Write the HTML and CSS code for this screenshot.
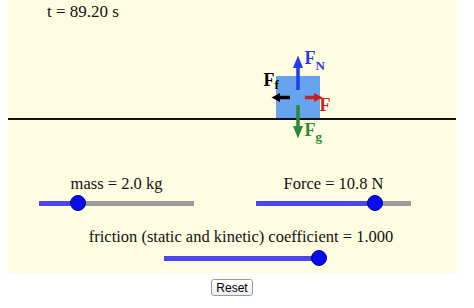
FILE: index.html
```html
<!DOCTYPE html>
<html>
<head>
<meta charset="utf-8">
<link rel="stylesheet" href="styles.css">
</head>
<body>
<div class="panel">
  <div class="time">t = 89.20 s</div>
  <svg class="scene" width="448" height="140" viewBox="0 0 448 140">
    <rect x="268" y="54" width="44" height="43" fill="#68a4ee"/>
    <line x1="0" y1="97" x2="448" y2="97" stroke="#111" stroke-width="2"/>
    <!-- normal force -->
    <line x1="290" y1="68" x2="290" y2="44" stroke="#1f3cf0" stroke-width="3.5"/>
    <polygon points="290,33.5 285,46 295,46" fill="#1f3cf0"/>
    <text class="flabel blue" x="296.5" y="41.5">F<tspan class="sub" dy="6.5">N</tspan></text>
    <!-- friction force -->
    <line x1="282" y1="75.5" x2="270" y2="75.5" stroke="#000" stroke-width="3.5"/>
    <polygon points="263.5,75.5 272,71 272,80" fill="#000"/>
    <text class="flabel black" x="255.5" y="64">F<tspan class="sub" dy="3">f</tspan></text>
    <!-- applied force -->
    <line x1="297" y1="75.5" x2="308" y2="75.5" stroke="#cc1f1f" stroke-width="3.5"/>
    <polygon points="314.5,75.5 306,71 306,80" fill="#cc1f1f"/>
    <text class="flabel red" x="311.5" y="88.5">F</text>
    <!-- gravity -->
    <line x1="290" y1="83" x2="290" y2="106" stroke="#2a8a36" stroke-width="3.5"/>
    <polygon points="290,116.5 285,104 295,104" fill="#2a8a36"/>
    <text class="flabel green" x="296.5" y="113.5">F<tspan class="sub" dy="5.5">g</tspan></text>
  </svg>
  <div class="pair">
    <div class="control">
      <div class="label">mass = 2.0 kg</div>
      <div class="slider">
        <div class="fill" style="width: 39px"></div>
        <div class="rest"></div>
        <div class="knob" style="left: 39px"></div>
      </div>
    </div>
    <div class="control">
      <div class="label">Force = 10.8 N</div>
      <div class="slider">
        <div class="fill" style="width: 119px"></div>
        <div class="rest"></div>
        <div class="knob" style="left: 119px"></div>
      </div>
    </div>
  </div>
  <div class="control single">
    <div class="label">friction (static and kinetic) coefficient = 1.000</div>
    <div class="slider">
      <div class="fill" style="width: 155px"></div>
      <div class="rest"></div>
      <div class="knob" style="left: 155px"></div>
    </div>
  </div>
</div>
<div class="actions">
  <button class="reset">Reset</button>
</div>
</body>
</html>
```
FILE: styles.css
```css
html, body {
  margin: 0;
  padding: 0;
  background: #ffffff;
}
body {
  padding: 0 8px;
  font-family: "Liberation Serif", "Times New Roman", serif;
  color: #111;
}
.panel {
  width: 448px;
  height: 273px;
  background: #fffde1;
  box-sizing: border-box;
}
.time {
  font-family: "Liberation Serif", "Times New Roman", serif;
  font-size: 17px;
  line-height: 19px;
  padding: 2px 0 0 39px;
  height: 22px;
  box-sizing: border-box;
}
.scene {
  display: block;
}
.flabel {
  font-family: "Liberation Serif", "Times New Roman", serif;
  font-weight: bold;
  font-size: 18px;
}
.flabel .sub {
  font-size: 13px;
}
.blue { fill: #1f3cf0; }
.black { fill: #000; }
.red { fill: #cc1f1f; }
.green { fill: #2a8a36; }
.pair {
  display: grid;
  grid-template-columns: 217px 217px;
  margin-top: 12px;
}
.control {
  display: flex;
  flex-direction: column;
  align-items: center;
}
.label {
  font-family: "Liberation Serif", "Times New Roman", serif;
  font-size: 16.5px;
  line-height: 19px;
  white-space: nowrap;
}
.slider {
  position: relative;
  width: 155px;
  height: 16px;
  margin-top: 2px;
  display: flex;
  align-items: center;
}
.fill {
  height: 5px;
  background: #4848ec;
}
.rest {
  flex: 1;
  height: 5px;
  background: #9b9b9b;
}
.knob {
  position: absolute;
  top: 0;
  width: 16px;
  height: 16px;
  margin-left: -8px;
  box-sizing: border-box;
  border-radius: 50%;
  background: #0b0bf0;
  border: 1px solid #00008a;
}
.single {
  width: 434px;
  margin: 16px 0 0 16px;
}
.single .slider {
  margin-top: 4px;
}
.actions {
  width: 448px;
  display: flex;
  justify-content: center;
  margin-top: 6px;
}
.reset {
  font-family: "Liberation Sans", Arial, sans-serif;
  font-size: 12px;
  line-height: 14px;
  height: 17px;
  padding: 0 4px;
  color: #000;
  background: linear-gradient(#ffffff, #ececec);
  border: 1px solid #9a9a9a;
  border-radius: 3px;
}
```
